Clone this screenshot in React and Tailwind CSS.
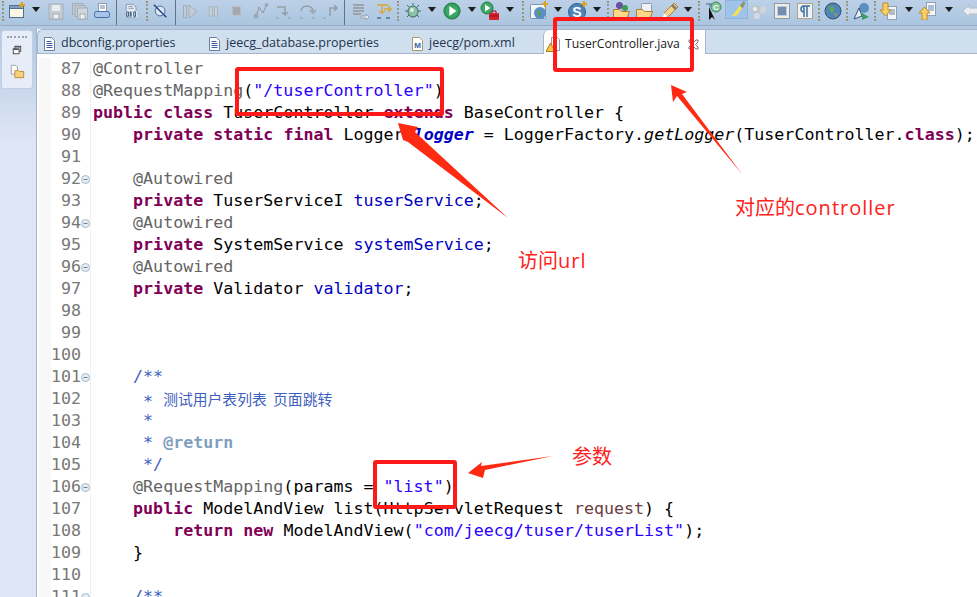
import React from "react";

const K = "font-bold text-[#7f0055]";
const A = "text-[#646464]";
const S = "text-[#2a00ff]";
const F = "text-[#0000c0]";
const D = "text-[#3f5fbf]";
const V = "text-[#6a3e3e]";

const lines = [
  [87, 0, [[A, "@Controller"]]],
  [88, 0, [[A, "@RequestMapping"], ["", "("], [S, '"/tuserController"'], ["", ")"]]],
  [89, 0, [[K, "public"], ["", " "], [K, "class"], ["", " TuserController "], [K, "extends"], ["", " BaseController {"]]],
  [90, 0, [["", "    "], [K, "private"], ["", " "], [K, "static"], ["", " "], [K, "final"], ["", " Logger "], ["font-bold italic text-[#0000c0]", "logger"], ["", " = LoggerFactory."], ["italic", "getLogger"], ["", "(TuserController."], [K, "class"], ["", ");"]]],
  [91, 0, []],
  [92, 1, [["", "    "], [A, "@Autowired"]]],
  [93, 0, [["", "    "], [K, "private"], ["", " TuserServiceI "], [F, "tuserService"], ["", ";"]]],
  [94, 1, [["", "    "], [A, "@Autowired"]]],
  [95, 0, [["", "    "], [K, "private"], ["", " SystemService "], [F, "systemService"], ["", ";"]]],
  [96, 1, [["", "    "], [A, "@Autowired"]]],
  [97, 0, [["", "    "], [K, "private"], ["", " Validator "], [F, "validator"], ["", ";"]]],
  [98, 0, []],
  [99, 0, []],
  [100, 0, []],
  [101, 1, [["", "    "], [D, "/**"]]],
  [102, 0, [[D, "     * "], ["text-[#3f5fbf] font-['Noto_Sans_CJK_SC',sans-serif] text-[14.8px] align-[2px] [word-spacing:3px]", "测试用户表列表 页面跳转"]]],
  [103, 0, [[D, "     *"]]],
  [104, 0, [[D, "     * "], ["font-bold text-[#7f9fbf]", "@return"]]],
  [105, 0, [[D, "     */"]]],
  [106, 1, [["", "    "], [A, "@RequestMapping"], ["", "(params = "], [S, '"list"'], ["", ")"]]],
  [107, 0, [["", "    "], [K, "public"], ["", " ModelAndView list(HttpServletRequest "], [V, "request"], ["", ") {"]]],
  [108, 0, [["", "        "], [K, "return"], ["", " "], [K, "new"], ["", " ModelAndView("], [S, '"com/jeecg/tuser/tuserList"'], ["", ");"]]],
  [109, 0, [["", "    }"]]],
  [110, 0, []],
  [111, 1, [["", "    "], [D, "/**"]]],
];

const Grip = () => <div className="mt-px h-[20px] w-0 self-start border-l-2 border-dotted border-[#9a9580]" />;
const Sep = () => <div className="h-[25px] w-px self-start bg-[#5f7389]" />;

const Caret = () => (
  <svg width="8" height="5" viewBox="0 0 8 5" className="-mt-[2px]">
    <path d="M0 0h8L4 5z" fill="#1c1c1c" />
  </svg>
);

const Ico = ({ children, w = 18 }) => (
  <svg width={w} height="18" viewBox="0 0 18 18" className="shrink-0">
    {children}
  </svg>
);

const PropsIcon = () => (
  <svg width="11" height="14" viewBox="0 0 11 14">
    <path d="M.5.500h7l3 3v10H.5z" fill="#fff" stroke="#6b7f9c" />
    <path d="M2.500 4.500h5M2.500 6.500h6M2.500 8.500h6M2.500 10.500h6" stroke="#3f5f9f" />
  </svg>
);

const Tab = ({ className, icon, label }) => (
  <div className={`flex items-center gap-[6px] pl-[6px] pt-[4px] ${className}`}>
    {icon}
    <span className="text-[12.5px] text-[#23364f]">{label}</span>
  </div>
);

function Toolbar() {
  const slot = "flex h-[21px] shrink-0 items-center justify-center";
  const off = "#a4adb6";
  return (
    <div className="flex h-[25px] bg-gradient-to-b from-[#bcd1e8] to-[#abc5e0]">
      <div className={`${slot} w-[6px]`}><Grip /></div>
      <div className={`${slot} w-[22px]`}>
        <Ico>
          <rect x="1.500" y="3.500" width="14" height="12" fill="#fdf8e4" stroke="#4f6f96" />
          <rect x="1.500" y="3.500" width="14" height="3" fill="#7f9cc0" stroke="#4f6f96" />
          <path d="M14 0v6M11 3h6" stroke="#d9a520" strokeWidth="2" />
        </Ico>
      </div>
      <div className={`${slot} w-[16px]`}><Caret /></div>
      <div className={`${slot} w-[24px]`}>
        <Ico>
          <rect x="2" y="2" width="14" height="15" fill="#c3ccd4" stroke={off} />
          <rect x="5" y="3" width="8" height="6" fill="#e9edf0" />
          <rect x="6" y="12" width="6" height="5" fill="#eef0f2" stroke={off} />
        </Ico>
      </div>
      <div className={`${slot} w-[24px]`}>
        <Ico>
          <rect x="1.500" y="1.500" width="10" height="11" fill="#c3ccd4" stroke={off} />
          <rect x="4" y="3.500" width="10" height="11" fill="#c3ccd4" stroke={off} />
          <rect x="6.500" y="6" width="10" height="11" fill="#ced6dc" stroke={off} />
          <rect x="9" y="12" width="5" height="5" fill="#eef0f2" stroke={off} />
        </Ico>
      </div>
      <div className={`${slot} w-[20px]`}>
        <Ico>
          <rect x="5.500" y="1.500" width="8" height="9" fill="#fff" stroke="#8f9aa8" />
          <path d="M7 4h5M7 6h5" stroke="#6d85a8" />
          <rect x="1.500" y="9.500" width="15" height="6" rx="2" fill="#a9c4e6" stroke="#3f6ca8" />
        </Ico>
      </div>
      <div className={`${slot} w-[8px]`}><Sep /></div>
      <div className={`${slot} w-[24px]`}>
        <Ico w={16}>
          <path d="M2.500 1.500h8l3 3v12h-11z" fill="#e6ecf4" stroke="#8794a6" />
          <path d="M5 4h5M5 6h6" stroke="#8794a6" />
          <rect x="2" y="9" width="13" height="7" fill="#dfe8f2" />
          <path d="M3 10h2v5H3zM7 10h1v5H7zM11 10h2v5h-2z" fill="none" stroke="#2f4a6b" />
        </Ico>
      </div>
      <div className={`${slot} w-[6px]`}><Grip /></div>
      <div className={`${slot} w-[22px]`}>
        <Ico w={16}>
          <circle cx="8" cy="9" r="5.500" fill="#dbe7f3" stroke="#3f5f8f" />
          <path d="M1 2l14 14" stroke="#1f3f7f" strokeWidth="1.500" />
        </Ico>
      </div>
      <div className={`${slot} w-[6px]`}><Sep /></div>
      <div className={`${slot} w-[24px]`}>
        <Ico>
          <rect x="2.500" y="3.500" width="3" height="12" fill="#c3ccd4" stroke={off} />
          <path d="M8 3l8 6.500L8 16z" fill="#c3ccd4" stroke={off} />
        </Ico>
      </div>
      <div className={`${slot} w-[25px]`}>
        <Ico w={14}>
          <rect x="1.500" y="3.500" width="4" height="12" fill="#c8d0d8" stroke={off} />
          <rect x="8.500" y="3.500" width="4" height="12" fill="#c8d0d8" stroke={off} />
        </Ico>
      </div>
      <div className={`${slot} w-[22px]`}>
        <Ico w={14}>
          <rect x="1.500" y="3.500" width="11" height="11" fill="#a4a8ac" stroke="#bcc4cc" />
        </Ico>
      </div>
      <div className={`${slot} w-[23px]`}>
        <Ico>
          <path d="M4 15L7 5l4 6 4-9" fill="none" stroke="#8f969c" />
          <circle cx="4" cy="14" r="2.500" fill="#a4a8ac" />
          <circle cx="14.500" cy="3" r="2" fill="#a4a8ac" />
        </Ico>
      </div>
      <div className={`${slot} w-[24px]`}>
        <Ico>
          <path d="M2 5h8v7M7 10l3 3 3-3" fill="none" stroke="#959da5" strokeWidth="1.500" />
          <path d="M1 16h3M13 16h3" stroke="#959da5" />
        </Ico>
      </div>
      <div className={`${slot} w-[24px]`}>
        <Ico>
          <path d="M2 9a6 5 0 0 1 12 0M11 8l3 3 3-3" fill="none" stroke="#959da5" strokeWidth="1.500" />
          <path d="M1 16h3M13 16h3" stroke="#959da5" />
        </Ico>
      </div>
      <div className={`${slot} w-[21px]`}>
        <Ico>
          <path d="M8 14V6h7M12 3l3 3-3 3" fill="none" stroke="#959da5" strokeWidth="1.500" />
          <path d="M1 16h3" stroke="#959da5" />
        </Ico>
      </div>
      <div className={`${slot} w-[6px]`}><Sep /></div>
      <div className={`${slot} w-[26px]`}>
        <Ico>
          <path d="M2 3h11M2 6h11M2 9h11M2 12h8" stroke="#9aa2aa" strokeWidth="2" />
          <path d="M10 14h5v-2l3 3-3 3v-2h-5z" fill="#e8edf2" stroke="#98a2ac" />
        </Ico>
      </div>
      <div className={`${slot} w-[22px]`}>
        <Ico>
          <path d="M2 3h11M7 3v8l-3-2M7 11l3-2M9 7h7M13 4l3 3-3 3" fill="none" stroke="#d8a73a" strokeWidth="1.500" />
          <path d="M2 16h4M11 16h4" stroke="#4d6f96" strokeWidth="1.500" />
        </Ico>
      </div>
      <div className={`${slot} w-[6px]`}><Grip /></div>
      <div className={`${slot} w-[24px]`}>
        <Ico>
          <path d="M3 3l12 12M15 3L3 15M1 9h16M9 1v2" stroke="#3c6b60" />
          <ellipse cx="9" cy="9.500" rx="5" ry="5.500" fill="#8fc0a8" stroke="#3c6b60" />
          <circle cx="8" cy="8" r="2" fill="#dbeee0" />
        </Ico>
      </div>
      <div className={`${slot} w-[14px]`}><Caret /></div>
      <div className={`${slot} w-[26px]`}>
        <svg width="18" height="18" viewBox="0 0 20 20">
          <circle cx="10" cy="10" r="9" fill="#2f9a57" stroke="#1f7a44" />
          <circle cx="10" cy="10" r="7" fill="#3aa866" />
          <path d="M7 4.500l8 5.500-8 5.500z" fill="#fff" />
        </svg>
      </div>
      <div className={`${slot} w-[14px]`}><Caret /></div>
      <div className={`${slot} w-[22px]`}>
        <svg width="20" height="20" viewBox="0 0 20 20" className="shrink-0">
          <circle cx="7" cy="7" r="6" fill="#3aa866" stroke="#1f7a44" />
          <path d="M5 3.500L10.500 7 5 10.500z" fill="#fff" />
          <rect x="9" y="12" width="10" height="7" rx="1" fill="#d8232a" />
          <path d="M12 12v-2h4v2M9 15h10" fill="none" stroke="#8f1218" />
        </svg>
      </div>
      <div className={`${slot} w-[18px]`}><Caret /></div>
      <div className={`${slot} w-[8px]`}><Grip /></div>
      <div className={`${slot} w-[24px]`}>
        <svg width="20" height="20" viewBox="0 0 20 20" className="shrink-0">
          <rect x="1.500" y="3.500" width="15" height="14" rx="1" fill="#f2f5f9" stroke="#7f93ab" />
          <circle cx="11" cy="12" r="6" fill="#5b8fc7" />
          <path d="M8 9c3 0 4 1 4 3s-2 4-2 4" fill="#5aa050" />
          <path d="M16 0v6M13 3h6" stroke="#d9a520" strokeWidth="2" />
        </svg>
      </div>
      <div className={`${slot} w-[13px]`}><Caret /></div>
      <div className={`${slot} w-[28px]`}>
        <svg width="20" height="20" viewBox="0 0 20 20" className="shrink-0">
          <circle cx="9" cy="11" r="8.500" fill="#4e83b8" stroke="#355f8c" />
          <text x="9" y="16" textAnchor="middle" fontSize="14" fontWeight="700" fontFamily="Liberation Sans" fill="#fff">S</text>
          <path d="M16 0v6M13 3h6" stroke="#d9a520" strokeWidth="2" />
        </svg>
      </div>
      <div className={`${slot} w-[10px]`}><Caret /></div>
      <div className={`${slot} w-[12px]`}><Grip /></div>
      <div className={`${slot} w-[16px]`}>
        <svg width="20" height="20" viewBox="0 0 20 20" className="shrink-0">
          <path d="M1.500 8.500h6l2 2h8l-3 8h-13z" fill="#fbd98c" stroke="#b07f2a" />
          <circle cx="7.500" cy="4.500" r="3.500" fill="#6a4fa0" />
          <circle cx="13" cy="7" r="3" fill="#3f9a57" />
        </svg>
      </div>
      <div className={`${slot} w-[30px]`}>
        <svg width="20" height="20" viewBox="0 0 20 20" className="shrink-0">
          <rect x="6.500" y="2.500" width="10" height="9" rx="1" fill="#eef1f5" stroke="#8f9aa8" />
          <path d="M1.500 8.500h6l2 2h8l-3 8h-13z" fill="#fbd98c" stroke="#b07f2a" />
        </svg>
      </div>
      <div className={`${slot} w-[20px]`}>
        <svg width="20" height="20" viewBox="0 0 20 20" className="shrink-0">
          <path d="M3 17l2-6 9-9 4 4-9 9z" fill="#f3d28c" stroke="#a87f3a" />
          <path d="M12 4l4 4" stroke="#8f7b66" strokeWidth="3" />
          <path d="M1 19l3-7 4 3z" fill="#fff" stroke="#c8c8c8" />
        </svg>
      </div>
      <div className={`${slot} w-[16px]`}><Caret /></div>
      <div className={`${slot} w-[6px]`}><Grip /></div>
      <div className={`${slot} w-[23px]`}>
        <svg width="20" height="20" viewBox="0 0 20 20" className="shrink-0">
          <path d="M2 3h9M6 3v3" stroke="#6a85a8" strokeWidth="1.500" />
          <path d="M5 6v13l3-3 3 3z" fill="#111" />
          <circle cx="12" cy="6" r="5" fill="#7fc29a" stroke="#3f8a5f" />
          <text x="12" y="9" textAnchor="middle" fontSize="8" fontWeight="700" fontFamily="Liberation Sans" fill="#fff">C</text>
        </svg>
      </div>
      <div className="flex h-[19px] w-[23px] shrink-0 items-center justify-center border border-[#8fb4dc] bg-[#9fc4ea]">
        <svg width="20" height="17" viewBox="0 0 20 18">
          <path d="M2 16c2 0 4-1 5-3l9-12 3 2-9 12c-2 1-5 1-8 1z" fill="#f3e05a" />
          <path d="M13 5l3 3 3-6-2-2z" fill="#8f8f80" />
        </svg>
      </div>
      <div className={`${slot} w-[22px]`}>
        <Ico>
          <circle cx="6" cy="8" r="5" fill="#bcc4cc" />
          <circle cx="13" cy="8" r="3.500" fill="#cfd5db" />
          <circle cx="7" cy="14" r="3" fill="#d5dadf" />
          <circle cx="5" cy="7" r="2" fill="#eceff2" />
        </Ico>
      </div>
      <div className={`${slot} w-[24px]`}>
        <Ico>
          <rect x="1.500" y="1.500" width="15" height="15" fill="#f1ece0" stroke="#8a9bb0" />
          <rect x="4" y="4" width="10" height="10" fill="#b9cbe2" />
          <path d="M5 6h8M5 8h8M5 10h8M5 12h8" stroke="#2f4f7f" />
        </Ico>
      </div>
      <div className={`${slot} w-[22px]`}>
        <Ico>
          <rect x="1.500" y="1.500" width="15" height="15" fill="#eef2f6" stroke="#b0a67f" />
          <path d="M8 4h6M8 4v11M11 4v11M8 4a3 3 0 0 0 0 6" fill="none" stroke="#3f6f9f" strokeWidth="1.500" />
        </Ico>
      </div>
      <div className={`${slot} w-[6px]`}><Grip /></div>
      <div className={`${slot} w-[22px]`}>
        <Ico>
          <circle cx="9" cy="9" r="8" fill="#4f86ba" stroke="#3a4f66" />
          <path d="M5 5c4-2 6 1 5 4s-3 2-4 0z" fill="#6aa457" />
          <path d="M10 11l3 1-1 3z" fill="#b79a4f" />
        </Ico>
      </div>
      <div className={`${slot} w-[6px]`}><Grip /></div>
      <div className={`${slot} w-[22px]`}>
        <Ico>
          <circle cx="12" cy="6" r="5" fill="#5c8ec0" />
          <path d="M2 17l5-11 3 8z" fill="#e8eef5" stroke="#36527a" />
          <path d="M10 11l7 4-7 3z" fill="#36a060" />
        </Ico>
      </div>
      <div className={`${slot} w-[6px]`}><Grip /></div>
      <div className={`${slot} w-[20px]`}>
        <Ico>
          <rect x="8.500" y="4.500" width="9" height="13" fill="#f4f6f9" stroke="#8fa0b5" />
          <path d="M10 8h6M10 10h6M10 12h6" stroke="#6d85a8" />
          <path d="M4 1h5v7h3l-5.500 6L1 8h3z" fill="#f7d06a" stroke="#c08a1f" />
        </Ico>
      </div>
      <div className={`${slot} w-[22px]`}><Caret /></div>
      <div className={`${slot} w-[14px]`}>
        <Ico>
          <rect x="8.500" y=".5" width="9" height="13" fill="#f4f6f9" stroke="#8fa0b5" />
          <path d="M10 4h6M10 6h6M10 8h6" stroke="#6d85a8" />
          <path d="M4 18h5v-7h3L6.500 5 1 11h3z" fill="#f7d06a" stroke="#c08a1f" />
        </Ico>
      </div>
      <div className={`${slot} w-[30px]`}><Caret /></div>
      <div className={`${slot} w-[13px]`}>
        <Ico>
          <path d="M1 9l6-6v3h10v6H7v3z" fill="#e9edf0" stroke="#b4bcc4" />
        </Ico>
      </div>
    </div>
  );
}

function Sidebar() {
  return (
    <div className="flex w-[37px] shrink-0 flex-col border-r border-[#a9b5cf] bg-gradient-to-b from-[#b0c8e2] to-[#dfe6f5] to-[20%] pt-[1px] pl-[1px]">
      <div className="flex h-[59px] w-[32px] flex-col items-center rounded-[3px] border border-[#c3cfe2] bg-[#e6ecf8] pt-[5px]">
        <div className="h-0 w-[20px] border-t-2 border-dotted border-[#9aa3b0]" />
        <svg className="mt-[7px]" width="10" height="10" viewBox="0 0 12 12">
          <rect x="3.500" y="1.500" width="7" height="6" fill="#fff" stroke="#333" />
          <rect x="1.500" y="4.500" width="7" height="6" fill="#fff" stroke="#333" />
          <path d="M2 5.500h6M4 2.500h6" stroke="#333" />
        </svg>
        <svg className="mt-[9px]" width="15" height="15" viewBox="0 0 17 17">
          <path d="M1.500 1.500h5l2 2v8h-7z" fill="#fff" stroke="#8f9aa8" />
          <path d="M5.500 7.500h4l1 1h5v7h-10z" fill="#f6d27a" stroke="#b8862a" />
        </svg>
      </div>
    </div>
  );
}

function Tabs() {
  return (
    <div className="flex h-[25px] rounded-tl-[6px] border-y border-l border-[#a9b5cf] bg-[#d0dfee]">
      <Tab className="w-[165px]" icon={<PropsIcon />} label="dbconfig.properties" />
      <Tab className="w-[203px]" icon={<PropsIcon />} label="jeecg_database.properties" />
      <Tab
        className="w-[137px]"
        icon={
          <svg width="11" height="14" viewBox="0 0 11 14">
            <path d="M.5.500h7l3 3v10H.5z" fill="#fff" stroke="#a89a66" />
            <text x="5.500" y="11" textAnchor="middle" fontSize="8" fontWeight="700" fontFamily="Liberation Sans" fill="#2f5f9f">M</text>
          </svg>
        }
        label="jeecg/pom.xml"
      />
      <div className="-mb-px flex w-[163px] items-center rounded-tl-[6px] border-x border-[#a9b5cf] bg-white pl-[2px] pt-[4px]">
        <svg width="14" height="15" viewBox="0 0 14 15">
          <path d="M5.500.500h6l2 2v11h-8z" fill="#fff" stroke="#8f9aa8" />
          <path d="M4.500 6L9 14.500H0z" fill="#f6c945" stroke="#a8801a" />
        </svg>
        <span className="ml-[5px] text-[12.2px] text-[#1c1c1c]">TuserController.java</span>
        <svg className="ml-[8px]" width="11" height="11" viewBox="0 0 11 11">
          <path d="M1 1h2l2.500 2.500L8 1h2v2L7.500 5.500 10 8v2H8L5.500 7.500 3 10H1V8l2.500-2.500L1 3z" fill="#fff" stroke="#777" />
        </svg>
      </div>
    </div>
  );
}

function Editor() {
  return (
    <div className="flex min-h-0 flex-1 overflow-hidden bg-white pl-[2px] pt-[4px] font-['DejaVu_Sans_Mono','Noto_Sans_CJK_SC',monospace] text-[16.65px] text-black">
      <div className="w-[12px] shrink-0 bg-[#f8f8f8]" />
      <div className="flex flex-col">
        {lines.map(([n, fold, tokens]) => (
          <div key={n} className="flex h-[22px] shrink-0 leading-[22px]">
            <div className="w-[30px] shrink-0 text-right text-[#787878]">{n}</div>
            <div className="flex w-[10px] shrink-0 items-center justify-center border-r border-[#f0f0f0]">
              {fold === 1 && (
                <svg width="9" height="9" viewBox="0 0 9 9">
                  <circle cx="4.500" cy="4.500" r="4" fill="#e4ecf4" stroke="#a8b8c8" />
                  <path d="M2.500 4.500h4" stroke="#6f8296" />
                </svg>
              )}
            </div>
            <div className="whitespace-pre pl-[2px]">
              {tokens.map(([cls, text], i) => (
                <span key={i} className={cls}>{text}</span>
              ))}
            </div>
          </div>
        ))}
      </div>
    </div>
  );
}

export default function App() {
  return (
    <div className="relative flex h-[597px] w-[977px] flex-col overflow-hidden bg-white font-['Open_Sans','Noto_Sans_CJK_SC',sans-serif]">
      <Toolbar />
      <div className="h-[4px] shrink-0 border-t border-[#98a9c3] bg-[#b2c9e2]" />
      <div className="flex min-h-0 flex-1">
        <Sidebar />
        <div className="flex min-w-0 flex-1 flex-col">
          <Tabs />
          <Editor />
        </div>
      </div>

      {/* red markup drawn over the screenshot */}
      <div className="absolute left-[235px] top-[67px] h-[49px] w-[209px] rounded-[3px] border-[4px] border-[#ff1a1a]" />
      <div className="absolute left-[553px] top-[17px] h-[55px] w-[141px] rounded-[3px] border-[4px] border-[#ff1a1a]" />
      <div className="absolute left-[373px] top-[460px] h-[49px] w-[84px] rounded-[3px] border-[4px] border-[#ff1a1a]" />
      <svg className="absolute left-0 top-0" width="977" height="597" viewBox="0 0 977 597">
        <polygon points="398,123 418,127 415,132 508,218 408,142 403,140" fill="#ff2a12" />
        <polygon points="671,85 687,92 682,94 742,174 677,96 673,102" fill="#ff2a12" />
        <polygon points="468,473 482,462 481,466 553,456 485,470 483,478" fill="#ff2a12" />
      </svg>
      <div className="absolute left-[518px] top-[247px] text-[20px] leading-[28px] text-[#ff2020]">
        访问<span className="tracking-[1px]">url</span>
      </div>
      <div className="absolute left-[735px] top-[194px] text-[20px] leading-[28px] text-[#ff2020]">
        对应的<span className="tracking-[1px]">controller</span>
      </div>
      <div className="absolute left-[572px] top-[443px] text-[20px] leading-[28px] text-[#ff2020]">参数</div>
    </div>
  );
}
